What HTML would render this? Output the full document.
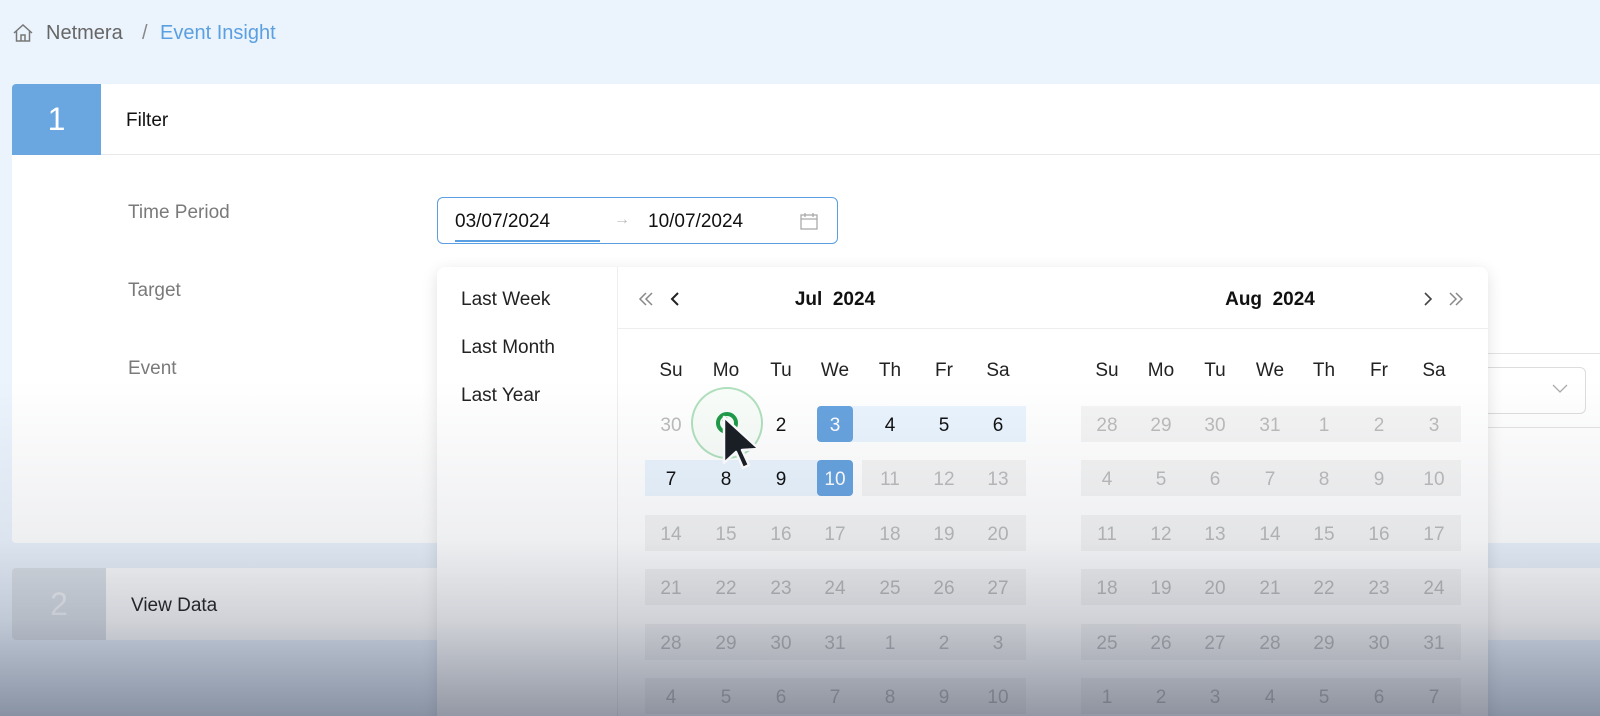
<!DOCTYPE html>
<html><head><meta charset="utf-8"><style>
*{box-sizing:border-box;margin:0;padding:0}
html{width:1600px;height:716px;overflow:hidden}
body{width:1600px;height:716px;overflow:hidden;background:#ebf3fd;font-family:"Liberation Sans",sans-serif;position:relative;color:#222}
.abs{position:absolute}
.card{position:absolute;left:12px;right:-10px;background:#fff;border-radius:4px;overflow:hidden}
.num{position:absolute;left:0;top:0;color:#fff;display:flex;align-items:center;justify-content:center;font-size:32px}
.lbl{position:absolute;left:128px;font-size:19px;color:#7a7a7a}
.cell{position:absolute;width:36px;height:36px;line-height:40px;text-align:center;font-size:19px;margin-left:-18px}
.row{position:absolute;height:36px}
.hd{position:absolute;font-size:19px;color:#222;width:40px;margin-left:-20px;text-align:center}
</style></head><body>
<svg class="abs" style="left:12px;top:23px" width="22" height="20" viewBox="0 0 22 20"><path d="M2 10 L11 2 L20 10 M4.5 8 V18 H17.5 V8 M9 18 V12 H13 V18" fill="none" stroke="#777" stroke-width="1.5"/></svg>
<div class="abs" style="left:46px;top:22px;font-size:20px;color:#666">Netmera</div>
<div class="abs" style="left:142px;top:22px;font-size:20px;color:#888">/</div>
<div class="abs" style="left:160px;top:22px;font-size:20px;color:#5a9fe0">Event Insight</div>

<div class="card" style="top:84px;height:459px">
  <div class="num" style="width:89px;height:71px;background:#6aa7e1">1</div>
  <div class="abs" style="left:114px;top:26px;font-size:19px;color:#111">Filter</div>
  <div class="abs" style="left:89px;right:0;top:70px;height:1px;background:#e8e8e8"></div>
</div>
<div class="lbl" style="top:202px">Time Period</div>
<div class="lbl" style="top:280px">Target</div>
<div class="lbl" style="top:358px">Event</div>

<div class="abs" style="left:1450px;right:0;top:353px;height:1px;background:#e3e3e3"></div>
<div class="abs" style="left:1450px;right:0;top:427px;height:1px;background:#e3e3e3"></div>
<div class="abs" style="left:1450px;width:136px;top:367px;height:47px;border:1px solid #ddd;border-radius:6px;background:#fff"></div>
<svg class="abs" style="left:1552px;top:384px" width="16" height="10"><path d="M1 1 L8 8 L15 1" fill="none" stroke="#aaa" stroke-width="1.3"/></svg>

<div class="abs" style="left:437px;top:197px;width:401px;height:47px;border:1px solid #5b9fe3;border-radius:6px;background:#fff"></div>
<div class="abs" style="left:455px;top:211px;font-size:19px;color:#111">03/07/2024</div>
<div class="abs" style="left:614px;top:211px;font-size:16px;color:#bbb">→</div>
<div class="abs" style="left:648px;top:211px;font-size:19px;color:#111">10/07/2024</div>
<div class="abs" style="left:455px;top:240px;width:145px;height:2px;background:#5b9fe3"></div>
<svg class="abs" style="left:799px;top:211px" width="20" height="20"><rect x="2" y="4" width="16" height="14" fill="none" stroke="#aaa" stroke-width="1.3"/><path d="M2 8 H18 M6 2 V6 M14 2 V6" stroke="#aaa" stroke-width="1.3"/></svg>

<div class="card" style="top:568px;height:72px">
  <div class="num" style="width:94px;height:72px;background:#dde2e8;color:#f3f5f8">2</div>
  <div class="abs" style="left:119px;top:27px;font-size:19px;color:#222">View Data</div>
</div>

<div class="abs" style="left:437px;top:267px;width:1051px;height:460px;background:#fff;border-radius:8px;box-shadow:0 4px 16px rgba(0,0,0,.12)">
  <div class="abs" style="left:180px;top:0;bottom:0;width:1px;background:#eee"></div>
  <div class="abs" style="left:180px;right:0;top:61px;height:1px;background:#eee"></div>
  <div class="abs" style="left:24px;top:22px;font-size:19px">Last Week</div>
  <div class="abs" style="left:24px;top:70px;font-size:19px">Last Month</div>
  <div class="abs" style="left:24px;top:118px;font-size:19px">Last Year</div>
</div>
<svg class="abs" style="left:638px;top:291px" width="60" height="16"><path d="M8 2 L2 8 L8 14 M14 2 L8 8 L14 14" fill="none" stroke="#888" stroke-width="1.5"/><path d="M40 2 L34 8 L40 14" fill="none" stroke="#222" stroke-width="2"/></svg>
<div class="abs" style="left:790px;top:289px;font-size:19px;font-weight:bold;width:90px;text-align:center;color:#111">Jul&nbsp; 2024</div>
<div class="abs" style="left:1222px;top:289px;font-size:19px;font-weight:bold;width:96px;text-align:center;color:#111">Aug&nbsp; 2024</div>
<svg class="abs" style="left:1420px;top:291px" width="50" height="16"><path d="M5 2 L11 8 L5 14" fill="none" stroke="#444" stroke-width="1.6"/><path d="M30 2 L36 8 L30 14 M36 2 L42 8 L36 14" fill="none" stroke="#888" stroke-width="1.5"/></svg>

<div id="cal"></div>
<script>
var jx=[671,726,781,835,890,944,998],ax=[1107,1161,1215,1270,1324,1379,1434];
var ry=[406,460,515,569,624,678];
var h='',d=['Su','Mo','Tu','We','Th','Fr','Sa'];
for(var i=0;i<7;i++){h+='<div class="hd" style="left:'+jx[i]+'px;top:360px">'+d[i]+'</div><div class="hd" style="left:'+ax[i]+'px;top:360px">'+d[i]+'</div>';}
for(var r=0;r<6;r++){
 if(r>=2) h+='<div class="row" style="left:645px;width:381px;top:'+ry[r]+'px;background:#f4f4f4"></div>';
 h+='<div class="row" style="left:1081px;width:380px;top:'+ry[r]+'px;background:#f4f4f4"></div>';
}
h+='<div class="row" style="left:835px;width:191px;top:406px;background:#eaf4fe"></div>';
h+='<div class="row" style="left:645px;width:190px;top:460px;background:#eaf4fe"></div>';
h+='<div class="row" style="left:862px;width:164px;top:460px;background:#f4f4f4"></div>';
var jul=[30,1,2,3,4,5,6,7,8,9,10,11,12,13,14,15,16,17,18,19,20,21,22,23,24,25,26,27,28,29,30,31,1,2,3,4,5,6,7,8,9,10];
var aug=[28,29,30,31,1,2,3,4,5,6,7,8,9,10,11,12,13,14,15,16,17,18,19,20,21,22,23,24,25,26,27,28,29,30,31,1,2,3,4,5,6,7];
for(var k=0;k<42;k++){var r=Math.floor(k/7),c=k%7;
 var col='#bbb',bg='';
 if(k>=1&&k<=10) col='#111';
 if(k==3||k==10){col='#fff';bg='background:#67a3df;border-radius:4px;';}
 h+='<div class="cell" style="left:'+jx[c]+'px;top:'+ry[r]+'px;color:'+col+';'+bg+'">'+jul[k]+'</div>';
 h+='<div class="cell" style="left:'+ax[c]+'px;top:'+ry[r]+'px;color:#bbb">'+aug[k]+'</div>';
}
document.getElementById('cal').innerHTML=h;
</script>
<div class="abs" style="left:691px;top:387px;width:72px;height:72px;border-radius:50%;border:2px solid rgba(120,200,140,.55);background:rgba(220,245,225,.2)"></div>
<div class="abs" style="left:716px;top:412px;width:22px;height:22px;border-radius:50%;border:4px solid #1f9a48"></div>
<svg class="abs" style="left:720px;top:414px" width="52" height="62"><path d="M4 3 L4 49 L16 38 L23 54 L29 51 L22 36 L39 35 Z" fill="#1a1d24" stroke="#fff" stroke-width="2.5" stroke-linejoin="round"/></svg>
<div class="abs" style="left:0;top:0;width:1600px;height:716px;pointer-events:none;background:linear-gradient(to bottom,rgba(40,50,75,0) 0px,rgba(40,50,75,0) 380px,rgba(40,50,75,.08) 540px,rgba(40,50,75,.22) 620px,rgba(40,50,75,.5) 716px)"></div>
</body></html>
